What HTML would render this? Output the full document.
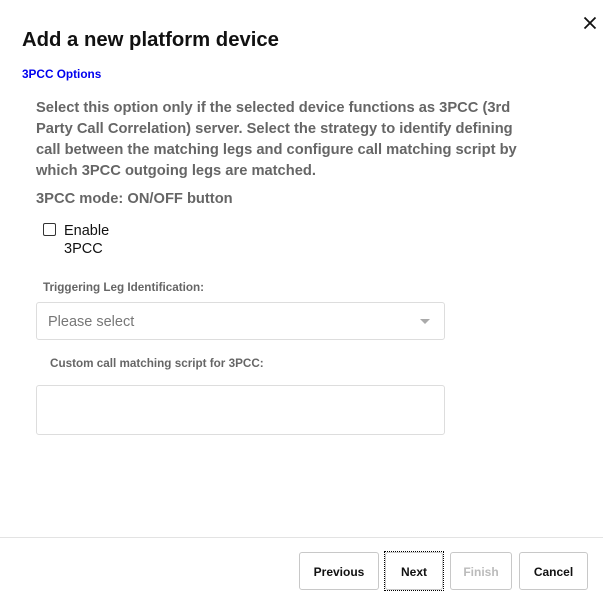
<!DOCTYPE html>
<html><head><style>
body{margin:0;width:603px;height:596px;background:#fff;font-family:"Liberation Sans",Arial,sans-serif;position:relative;overflow:hidden}
.a{position:absolute;white-space:nowrap}
.btn{position:absolute;top:552px;height:38px;padding-top:2px;border:1px solid #c8c8c8;border-radius:3px;box-sizing:border-box;font-size:12px;font-weight:bold;display:flex;align-items:center;justify-content:center;color:#111;background:#fff}
</style></head><body>
<svg class="a" style="left:583px;top:16px" width="14" height="14" viewBox="0 0 14 14"><path d="M1.5 1.5L12.5 12.5M12.5 1.5L1.5 12.5" stroke="#111" stroke-width="1.8"/></svg>
<div class="a" style="left:22px;top:29px;font-size:20.3px;font-weight:bold;color:#111">Add a new platform device</div>
<div class="a" style="left:22px;top:67px;font-size:11.8px;font-weight:bold;color:#0000ee">3PCC Options</div>
<div class="a" style="left:36px;top:98px;font-size:14.7px;font-weight:bold;color:#666;line-height:21px;white-space:nowrap">Select this option only if the selected device functions as 3PCC (3rd<br>Party Call Correlation) server. Select the strategy to identify defining<br>call between the matching legs and configure call matching script by<br>which 3PCC outgoing legs are matched.</div>
<div class="a" style="left:36px;top:191px;font-size:14.7px;font-weight:bold;color:#666">3PCC mode: ON/OFF button</div>
<div class="a" style="left:43px;top:223px;width:11px;height:11px;border:1.5px solid #333;border-radius:2px"></div>
<div class="a" style="left:64px;top:222px;font-size:14.5px;color:#111;line-height:18px">Enable<br>3PCC</div>
<div class="a" style="left:43px;top:281px;font-size:11.7px;font-weight:bold;color:#666">Triggering Leg Identification:</div>
<div class="a" style="left:36px;top:302px;width:409px;height:38px;border:1px solid #ddd;border-radius:3px;box-sizing:border-box"></div>
<div class="a" style="left:48px;top:314px;font-size:14.5px;color:#777">Please select</div>
<div class="a" style="left:420px;top:319px;width:0;height:0;border-left:5px solid transparent;border-right:5px solid transparent;border-top:5px solid #aaa"></div>
<div class="a" style="left:50px;top:357px;font-size:11.7px;font-weight:bold;color:#666">Custom call matching script for 3PCC:</div>
<div class="a" style="left:36px;top:385px;width:409px;height:50px;border:1px solid #ddd;border-radius:3px;box-sizing:border-box"></div>
<div class="a" style="left:0;top:537px;width:603px;height:1px;background:#e3e3e3"></div>
<div class="btn" style="left:299px;width:80px">Previous</div>
<div class="btn" style="left:385px;width:58px">Next</div>
<div class="a" style="left:384px;top:551px;width:58px;height:38px;border:1px dotted #000"></div>
<div class="btn" style="left:450px;width:62px;color:#bbb">Finish</div>
<div class="btn" style="left:519px;width:69px">Cancel</div>
</body></html>
